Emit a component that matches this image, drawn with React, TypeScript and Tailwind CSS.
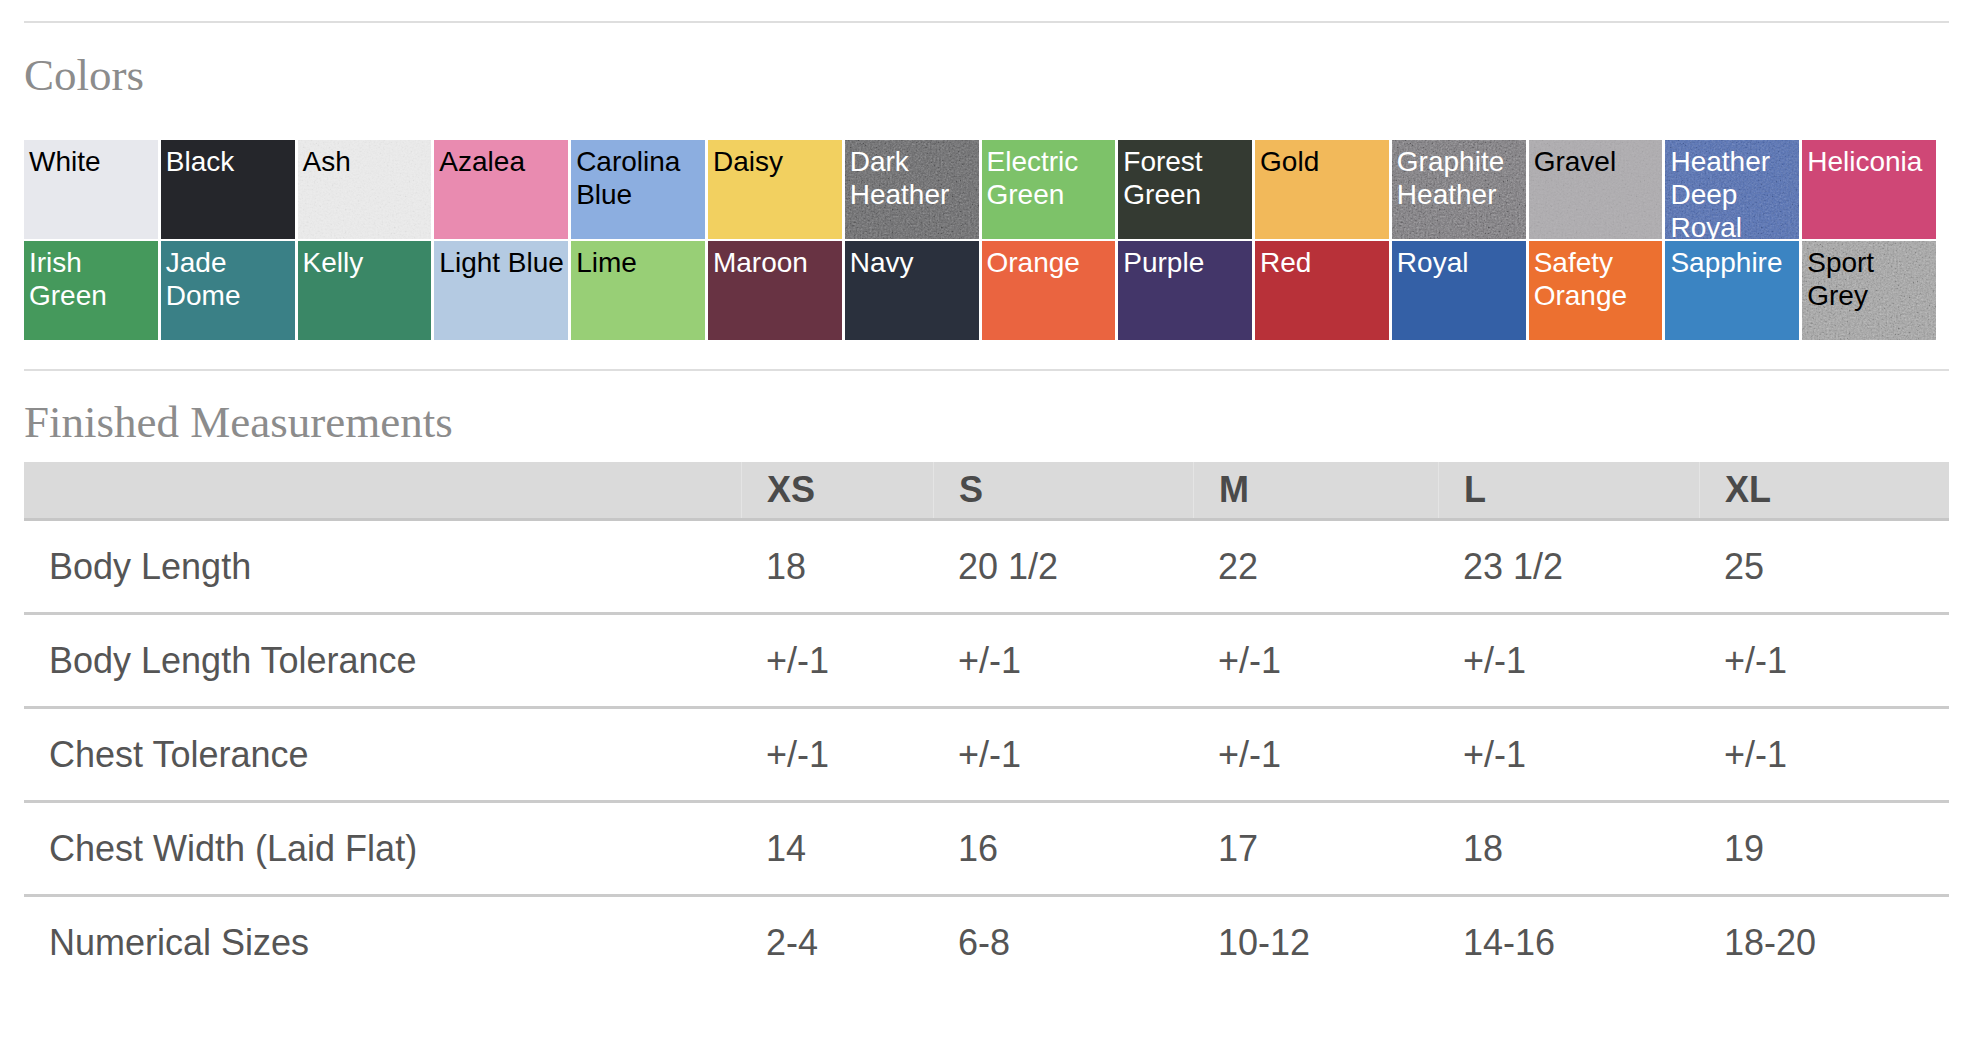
import React from 'react';

type Swatch = { lines: string[]; bg: string; dark: boolean; grain?: number };

const SWATCHES: Swatch[] = [
  { lines: ['White'], bg: 'bg-[#e7e8ed]', dark: true },
  { lines: ['Black'], bg: 'bg-[#25262b]', dark: false },
  { lines: ['Ash'], bg: 'bg-[#ebebeb]', dark: true, grain: 0.08 },
  { lines: ['Azalea'], bg: 'bg-[#e98bb0]', dark: true },
  { lines: ['Carolina', 'Blue'], bg: 'bg-[#8caee0]', dark: true },
  { lines: ['Daisy'], bg: 'bg-[#f2d060]', dark: true },
  { lines: ['Dark', 'Heather'], bg: 'bg-[#6a6a6c]', dark: false, grain: 0.35 },
  { lines: ['Electric', 'Green'], bg: 'bg-[#7dc269]', dark: false },
  { lines: ['Forest', 'Green'], bg: 'bg-[#343a32]', dark: false },
  { lines: ['Gold'], bg: 'bg-[#f2b95a]', dark: true },
  { lines: ['Graphite', 'Heather'], bg: 'bg-[#7d7b7f]', dark: false, grain: 0.4 },
  { lines: ['Gravel'], bg: 'bg-[#afadb0]', dark: true, grain: 0.1 },
  { lines: ['Heather', 'Deep', 'Royal'], bg: 'bg-[#5571b4]', dark: false, grain: 0.25 },
  { lines: ['Heliconia'], bg: 'bg-[#cf4776]', dark: false },
  { lines: ['Irish', 'Green'], bg: 'bg-[#45995c]', dark: false },
  { lines: ['Jade', 'Dome'], bg: 'bg-[#3a8086]', dark: false },
  { lines: ['Kelly'], bg: 'bg-[#3a8766]', dark: false },
  { lines: ['Light Blue'], bg: 'bg-[#b4cae2]', dark: true },
  { lines: ['Lime'], bg: 'bg-[#98cf76]', dark: true },
  { lines: ['Maroon'], bg: 'bg-[#683343]', dark: false },
  { lines: ['Navy'], bg: 'bg-[#2a303d]', dark: false },
  { lines: ['Orange'], bg: 'bg-[#ea6440]', dark: false },
  { lines: ['Purple'], bg: 'bg-[#433669]', dark: false },
  { lines: ['Red'], bg: 'bg-[#b83139]', dark: false },
  { lines: ['Royal'], bg: 'bg-[#3460a6]', dark: false },
  { lines: ['Safety', 'Orange'], bg: 'bg-[#ec7030]', dark: false },
  { lines: ['Sapphire'], bg: 'bg-[#3b84c2]', dark: false },
  { lines: ['Sport', 'Grey'], bg: 'bg-[#a7a7a7]', dark: true, grain: 0.35 },
];

const SIZES = ['XS', 'S', 'M', 'L', 'XL'];

const ROWS: { label: string; values: string[] }[] = [
  { label: 'Body Length', values: ['18', '20 1/2', '22', '23 1/2', '25'] },
  { label: 'Body Length Tolerance', values: ['+/-1', '+/-1', '+/-1', '+/-1', '+/-1'] },
  { label: 'Chest Tolerance', values: ['+/-1', '+/-1', '+/-1', '+/-1', '+/-1'] },
  { label: 'Chest Width (Laid Flat)', values: ['14', '16', '17', '18', '19'] },
  { label: 'Numerical Sizes', values: ['2-4', '6-8', '10-12', '14-16', '18-20'] },
];

const COLS = 'grid grid-cols-[717px_192px_260px_245px_261px_250px]';

function SectionTitle({ children }: { children: React.ReactNode }) {
  return (
    <h2 className="text-[45px] leading-[44px] text-[#8c8c8c] font-['Liberation_Serif','Times_New_Roman',serif]">
      {children}
    </h2>
  );
}

// speckled overlay for the heather fabrics
function Grain({ id, opacity }: { id: string; opacity: number }) {
  return (
    <svg className="absolute inset-0 h-full w-full" style={{ opacity }} aria-hidden="true">
      <filter id={id}>
        <feTurbulence type="fractalNoise" baseFrequency="0.55" numOctaves={2} seed={3} />
        <feColorMatrix type="saturate" values="0" />
        <feComponentTransfer>
          <feFuncR type="linear" slope="2.2" intercept="-0.6" />
          <feFuncG type="linear" slope="2.2" intercept="-0.6" />
          <feFuncB type="linear" slope="2.2" intercept="-0.6" />
        </feComponentTransfer>
      </filter>
      <rect width="100%" height="100%" filter={`url(#${id})`} />
    </svg>
  );
}

export default function App() {
  return (
    <div className="min-h-screen bg-white font-['Liberation_Sans',Arial,sans-serif]">
      <div className="ml-[24px] w-[1925px] pt-[21px]">
        <div className="border-t-2 border-[#dedede]" />

        <div className="mt-[30px]">
          <SectionTitle>Colors</SectionTitle>
        </div>

        <div className="mt-[43px] grid w-[1912px] grid-cols-14 gap-x-[3px] gap-y-[2px]">
          {SWATCHES.map((s, i) => (
            <div
              key={s.lines.join(' ')}
              className={`${s.bg} ${s.dark ? 'text-black' : 'text-white'} relative h-[99px] overflow-hidden px-[5px] pt-[5px] text-[28px] leading-[33px]`}
            >
              {s.grain && <Grain id={`grain-${i}`} opacity={s.grain} />}
              <div className="relative">
                {s.lines.map(line => (
                  <div key={line} className="whitespace-nowrap">{line}</div>
                ))}
              </div>
            </div>
          ))}
        </div>

        <div className="mt-[29px] border-t-2 border-[#dedede]" />

        <div className="mt-[29px]">
          <SectionTitle>Finished Measurements</SectionTitle>
        </div>

        <div className="mt-[18px] text-[36px] text-[#555555]">
          <div className={`${COLS} h-[59px] bg-[#dadada] border-b-[3px] border-[#c6c6c6]`}>
            <div />
            {SIZES.map(size => (
              <div
                key={size}
                className="flex items-center border-l border-[#e4e4e4] px-[25px] font-bold text-[#4a4a4a]"
              >
                {size}
              </div>
            ))}
          </div>

          {ROWS.map((row, i) => (
            <div
              key={row.label}
              className={`${COLS} ${i < ROWS.length - 1 ? 'h-[94px] border-b-[3px] border-[#cbcbcb]' : 'h-[91px]'}`}
            >
              <div className="flex items-center px-[25px]">{row.label}</div>
              {row.values.map((v, j) => (
                <div key={j} className="flex items-center px-[25px]">{v}</div>
              ))}
            </div>
          ))}
        </div>
      </div>
    </div>
  );
}
